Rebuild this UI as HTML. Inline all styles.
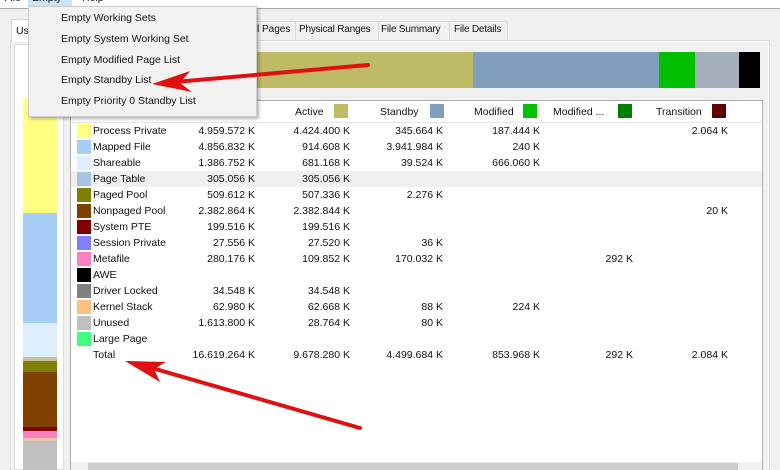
<!DOCTYPE html>
<html><head><meta charset="utf-8"><style>
*{margin:0;padding:0;box-sizing:border-box}
html,body{width:780px;height:470px;overflow:hidden}
body{background:#f0f0f0;font-family:"Liberation Sans",sans-serif;font-size:10.5px;line-height:16px;color:#111;position:relative}
.a{position:absolute}
.r{position:absolute;text-align:right;white-space:nowrap}
.t{position:absolute;white-space:nowrap}
.sw{position:absolute;width:14px;height:14px}
</style></head><body>
<div class="a" style="left:0;top:0;width:780px;height:8px;background:#fff"></div>
<div class="a" style="left:0;top:8px;width:780px;height:1px;background:#aaa"></div>
<div class="t" style="left:4px;top:-10px">File</div>
<div class="a" style="left:28px;top:0;width:44px;height:7px;background:#cce4f7"></div>
<div class="t" style="left:32px;top:-10px">Empty</div>
<div class="t" style="left:82px;top:-10px">Help</div>
<!-- tabs -->
<div class="a" style="left:10px;top:40px;width:760px;height:430px;background:#fff;border:1px solid #d9d9d9"></div>
<div class="a" style="left:11px;top:19px;width:40px;height:23px;background:#fff;border:1px solid #d9d9d9;border-bottom:none"></div>
<div class="t" style="left:16px;top:23px">Us</div>
<div class="a" style="left:252px;top:21px;width:256px;height:19px;border-right:1px solid #d9d9d9;border-top:1px solid #d9d9d9"></div>
<div class="t" style="left:257px;top:22px;font-size:10px">l Pages</div>
<div class="a" style="left:295px;top:21px;width:1px;height:19px;background:#d9d9d9"></div>
<div class="t" style="left:299px;top:22px;font-size:10px;letter-spacing:-0.2px">Physical Ranges</div>
<div class="a" style="left:378px;top:21px;width:1px;height:19px;background:#d9d9d9"></div>
<div class="t" style="left:381px;top:22px;font-size:10px;letter-spacing:-0.2px">File Summary</div>
<div class="a" style="left:449px;top:21px;width:1px;height:19px;background:#d9d9d9"></div>
<div class="t" style="left:454px;top:22px;font-size:10px;letter-spacing:-0.2px">File Details</div>
<!-- inner panel -->
<div class="a" style="left:12px;top:42px;width:756px;height:428px;background:#f0f0f0"></div>
<div class="a" style="left:14px;top:44px;width:50px;height:426px;background:#fff;border:1px solid #ddd"></div>
<!-- vertical bar -->
<div class="a" style="left:23px;top:98px;width:34px;height:372px;background:#fff;overflow:hidden">
<div style="height:115px;background:#ffff80"></div>
<div style="height:110px;background:#a6cef6"></div>
<div style="height:34px;background:#ddeefc"></div>
<div style="height:4px;background:#c8c09a"></div>
<div style="height:11px;background:#808000"></div>
<div style="height:55px;background:#804000"></div>
<div style="height:4px;background:#800000"></div>
<div style="height:7px;background:#ff80c0"></div>
<div style="height:3px;background:#e8c8a8"></div>
<div style="height:40px;background:#c0c0c0"></div>
</div>
<!-- horizontal bar -->
<div class="a" style="left:70px;top:52px;width:690px;height:36px;background:#fff;display:flex">
<div style="width:403px;background:#bfba66"></div>
<div style="width:186px;background:#819ebd"></div>
<div style="width:36px;background:#00c000"></div>
<div style="width:44px;background:#a6b0bb"></div>
<div style="width:21px;background:#000"></div>
</div>
<!-- list -->
<div class="a" style="left:70px;top:100px;width:693px;height:370px;background:#fff;border:1px solid #adadad"></div>
<div class="a" style="left:71px;top:122px;width:691px;height:1px;background:#e5e5e5"></div>
<div class="a" style="left:71px;top:171px;width:691px;height:16px;background:#f0f0f0"></div>
<div class="t" style="left:78px;top:104px">Usage</div>
<div class="r" style="right:530px;top:104px">Total</div>
<div class="t" style="left:295px;top:104px">Active</div><div class="sw" style="left:334px;top:104px;background:#bfba66"></div>
<div class="t" style="left:380px;top:104px">Standby</div><div class="sw" style="left:430px;top:104px;background:#819ebd"></div>
<div class="t" style="left:474px;top:104px">Modified</div><div class="sw" style="left:523px;top:104px;background:#00c000"></div>
<div class="t" style="left:553px;top:104px">Modified ...</div><div class="sw" style="left:618px;top:104px;background:#008000"></div>
<div class="t" style="left:656px;top:104px">Transition</div><div class="sw" style="left:712px;top:104px;background:#600000"></div>
<div id="rows"></div>
<script>
var d=[["Process Private","#ffff80","4.959.572 K","4.424.400 K","345.664 K","187.444 K","","2.064 K"],
["Mapped File","#a6cef6","4.856.832 K","914.608 K","3.941.984 K","240 K","",""],
["Shareable","#ddeefc","1.386.752 K","681.168 K","39.524 K","666.060 K","",""],
["Page Table","#a8c4e0","305.056 K","305.056 K","","","",""],
["Paged Pool","#808000","509.612 K","507.336 K","2.276 K","","",""],
["Nonpaged Pool","#804000","2.382.864 K","2.382.844 K","","","","20 K"],
["System PTE","#800000","199.516 K","199.516 K","","","",""],
["Session Private","#8080ff","27.556 K","27.520 K","36 K","","",""],
["Metafile","#ff80c0","280.176 K","109.852 K","170.032 K","","292 K",""],
["AWE","#000000","","","","","",""],
["Driver Locked","#808080","34.548 K","34.548 K","","","",""],
["Kernel Stack","#ffc080","62.980 K","62.668 K","88 K","224 K","",""],
["Unused","#c0c0c0","1.613.800 K","28.764 K","80 K","","",""],
["Large Page","#40ff80","","","","","",""],
["Total","","16.619.264 K","9.678.280 K","4.499.684 K","853.968 K","292 K","2.084 K"]];
var R=[525,430,337,240,147,52],h="";
d.forEach(function(r,i){var y=123+i*16;
if(r[1])h+='<div class="sw" style="left:77px;top:'+(y+1)+'px;background:'+r[1]+'"></div>';
h+='<div class="t" style="left:93px;top:'+y+'px">'+r[0]+'</div>';
for(var j=0;j<6;j++)if(r[j+2])h+='<div class="r" style="right:'+R[j]+'px;top:'+y+'px">'+r[j+2]+'</div>';});
document.getElementById('rows').innerHTML=h;
</script>
<div class="a" style="left:71px;top:462px;width:691px;height:8px;background:#f0f0f0"></div>
<div class="a" style="left:88px;top:463px;width:650px;height:7px;background:#cdcdcd"></div>
<!-- dropdown menu -->
<div class="a" style="left:28px;top:6px;width:229px;height:111px;background:#f2f2f2;border:1px solid #ccc;box-shadow:2px 2px 3px rgba(0,0,0,.3)"></div>
<div class="t" style="left:61px;top:10px">Empty Working Sets</div>
<div class="t" style="left:61px;top:31px">Empty System Working Set</div>
<div class="t" style="left:61px;top:52px">Empty Modified Page List</div>
<div class="t" style="left:61px;top:72px">Empty Standby List</div>
<div class="t" style="left:61px;top:93px">Empty Priority 0 Standby List</div>
<!-- arrows -->
<svg class="a" style="left:0;top:0" width="780" height="470">
<line x1="368" y1="65" x2="175" y2="82" stroke="#e01010" stroke-width="4" stroke-linecap="round"/>
<polygon points="152,84 190,71 180,83 192,92" fill="#e01010"/>
<line x1="360" y1="428" x2="145" y2="366" stroke="#e01010" stroke-width="4" stroke-linecap="round"/>
<polygon points="125,361 166,362 154,369 160,382" fill="#e01010"/>
</svg>
</body></html>
